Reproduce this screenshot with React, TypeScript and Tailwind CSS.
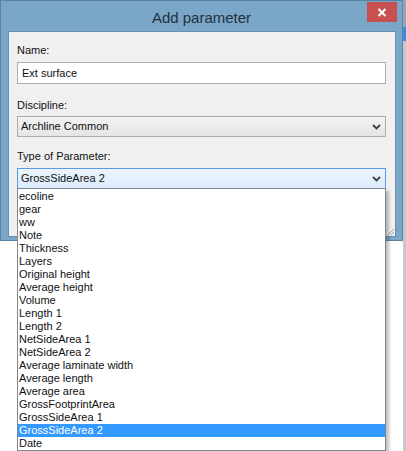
import React from 'react';

const items = [
  'ecoline',
  'gear',
  'ww',
  'Note',
  'Thickness',
  'Layers',
  'Original height',
  'Average height',
  'Volume',
  'Length 1',
  'Length 2',
  'NetSideArea 1',
  'NetSideArea 2',
  'Average laminate width',
  'Average length',
  'Average area',
  'GrossFootprintArea',
  'GrossSideArea 1',
  'GrossSideArea 2',
  'Date',
];

const selected = 'GrossSideArea 2';

function Chevron() {
  return (
    <svg width="9" height="6" viewBox="0 0 9 6" className="mr-[4px]">
      <polyline points="1,1 4.5,4.5 8,1" fill="none" stroke="#404040" strokeWidth="1.8" />
    </svg>
  );
}

export default function App() {
  const font = { fontFamily: '"Liberation Sans", Arial, sans-serif' };
  return (
    <div className="relative w-[406px] h-[451px] bg-white overflow-hidden flex text-[11px] text-[#101010]" style={font}>
      {/* Dialog window */}
      <div className="w-[403px] h-[241px] bg-[#7aa6c8] border border-[#5b83a4] flex flex-col px-[7px]">
        {/* Title bar */}
        <div className="relative h-[30px] flex items-center justify-center">
          <span className="text-[15px] text-[#23313d] leading-none pt-[2px]">Add parameter</span>
          <div className="absolute right-[-2px] top-[1px] w-[30px] h-[20px] bg-[#c75050] flex items-center justify-center">
            <svg width="10" height="9" viewBox="0 0 10 9">
              <path d="M1.5 1 L8.5 8 M8.5 1 L1.5 8" stroke="white" strokeWidth="2" />
            </svg>
          </div>
        </div>

        {/* Client area */}
        <div className="relative h-[206px] mr-[-1px] bg-[#f0f0f0] border border-[#6b8fae] flex flex-col pl-[8px] pr-[9px]">
          <div className="mt-[10px] h-[16px] leading-[16px]">Name:</div>
          <div className="mt-[4px] h-[22px] bg-white border border-[#abadb3] flex items-center pl-[4px]">
            Ext surface
          </div>

          <div className="mt-[13px] h-[16px] leading-[16px]">Discipline:</div>
          <div className="mt-[3px] h-[21px] border border-[#acacac] bg-gradient-to-b from-[#f2f2f2] to-[#e5e5e5] flex items-center justify-between pl-[3px]">
            <span>Archline Common</span>
            <Chevron />
          </div>

          <div className="mt-[11px] h-[16px] leading-[16px]">Type of Parameter:</div>
          <div className="mt-[4px] h-[21px] border border-[#569de5] bg-gradient-to-b from-[#ecf4fc] to-[#dcecfc] flex items-center justify-between pl-[3px]">
            <span>{selected}</span>
            <Chevron />
          </div>

          {/* Resize grip */}
          <svg width="9" height="9" viewBox="0 0 9 9" className="absolute right-[0px] bottom-[0px]">
            <path d="M8 2 L2 8 M8 5 L5 8 M8 8 L8 8" stroke="#a0a0a0" strokeWidth="1" />
          </svg>
        </div>
      </div>

      {/* Window behind */}
      <div className="flex-1 flex flex-col">
        <div className="h-[27px] bg-[#9aa4ad]" />
        <div className="h-[14px] bg-[#3c8ad8]" />
        <div className="flex-1 bg-[#c8c8c8]" />
      </div>

      {/* Open dropdown list */}
      <div className="absolute left-[17px] top-[188px] w-[369px] h-[263px] bg-white border border-[#7a8795] py-[1px] shadow-[3px_3px_3px_rgba(0,0,0,0.25)]">
        {items.map((item) => (
          <div
            key={item}
            className={
              item === selected
                ? 'h-[13px] leading-[13px] pl-[1px] bg-[#3399ff] text-white'
                : 'h-[13px] leading-[13px] pl-[1px]'
            }
          >
            {item}
          </div>
        ))}
      </div>
    </div>
  );
}
